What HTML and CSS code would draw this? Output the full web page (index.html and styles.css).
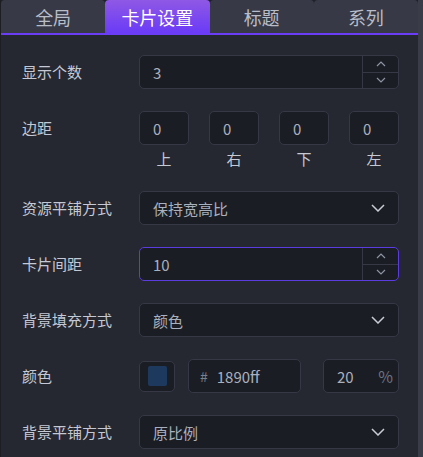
FILE: index.html
```html
<!DOCTYPE html>
<html lang="zh">
<head>
<meta charset="utf-8">
<title>卡片设置</title>
<link rel="stylesheet" href="styles.css">
</head>
<body>
<div class="panel">
  <div class="main">
    <div class="tabs">
      <div class="tab">全局</div>
      <div class="tab active">卡片设置</div>
      <div class="tab">标题</div>
      <div class="tab">系列</div>
    </div>
    <div class="form">
      <div class="row">
        <div class="label">显示个数</div>
        <div class="field">
          <span class="val">3</span>
          <div class="spin">
            <span class="spin-btn top"><svg width="10" height="6" viewBox="0 0 10 6"><polyline points="1,5 5,1 9,5" /></svg></span>
            <span class="spin-btn"><svg width="10" height="6" viewBox="0 0 10 6"><polyline points="1,1 5,5 9,1" /></svg></span>
          </div>
        </div>
      </div>

      <div class="row row-top">
        <div class="label">边距</div>
        <div class="margins">
          <div class="field box"><span class="val">0</span></div>
          <div class="field box"><span class="val">0</span></div>
          <div class="field box"><span class="val">0</span></div>
          <div class="field box"><span class="val">0</span></div>
          <div class="sub">上</div>
          <div class="sub">右</div>
          <div class="sub">下</div>
          <div class="sub">左</div>
        </div>
      </div>

      <div class="row">
        <div class="label">资源平铺方式</div>
        <div class="field select">
          <span class="val">保持宽高比</span>
          <svg class="chev" width="14" height="8" viewBox="0 0 14 8"><polyline points="1,1 7,7 13,1" /></svg>
        </div>
      </div>

      <div class="row">
        <div class="label">卡片间距</div>
        <div class="field focus">
          <span class="val">10</span>
          <div class="spin">
            <span class="spin-btn top"><svg width="10" height="6" viewBox="0 0 10 6"><polyline points="1,5 5,1 9,5" /></svg></span>
            <span class="spin-btn"><svg width="10" height="6" viewBox="0 0 10 6"><polyline points="1,1 5,5 9,1" /></svg></span>
          </div>
        </div>
      </div>

      <div class="row">
        <div class="label">背景填充方式</div>
        <div class="field select">
          <span class="val">颜色</span>
          <svg class="chev" width="14" height="8" viewBox="0 0 14 8"><polyline points="1,1 7,7 13,1" /></svg>
        </div>
      </div>

      <div class="row">
        <div class="label">颜色</div>
        <div class="color-line">
          <div class="swatch"><span class="swatch-fill"></span></div>
          <div class="field hex"><span class="hash">#</span><span class="val">1890ff</span></div>
          <div class="field pct"><span class="val">20</span><span class="unit">%</span></div>
        </div>
      </div>

      <div class="row">
        <div class="label">背景平铺方式</div>
        <div class="field select">
          <span class="val">原比例</span>
          <svg class="chev" width="14" height="8" viewBox="0 0 14 8"><polyline points="1,1 7,7 13,1" /></svg>
        </div>
      </div>
    </div>
  </div>
  <div class="scrollbar"></div>
</div>
</body>
</html>
```

FILE: styles.css
```css
* { box-sizing: border-box; }

html, body {
  margin: 0;
  padding: 0;
  background: #252731;
}

body {
  font-family: "Noto Sans CJK SC", "Noto Sans", sans-serif;
  font-size: 15px;
  color: #c5c9d3;
}

.panel {
  width: 423px;
  height: 457px;
  display: flex;
  overflow: hidden;
  background: #252731;
  border-left: 1px solid #1c1e24;
}

.main {
  flex: 1;
  min-width: 0;
  display: flex;
  flex-direction: column;
}

.scrollbar {
  width: 5px;
  background: #3a3d48;
}

.tabs {
  display: flex;
  height: 35px;
  background: #1f2128;
  border-bottom: 2px solid #6b3ef5;
}

.tab {
  flex: 1;
  display: flex;
  align-items: center;
  justify-content: center;
  background: #373a46;
  border-radius: 4px 4px 0 0;
  color: #b9bdc7;
  font-size: 18px;
  line-height: 1;
}

.tab.active {
  background: linear-gradient(180deg, #8f58e5 0%, #6a3bf7 100%);
  color: #ffffff;
}

.form {
  padding: 20px 19px 0 21px;
  display: flex;
  flex-direction: column;
  gap: 22px;
}

.row {
  display: grid;
  grid-template-columns: 117px 1fr;
  align-items: center;
}

.row-top {
  align-items: start;
}

.label {
  line-height: 34px;
  white-space: nowrap;
}

.field {
  height: 34px;
  display: flex;
  align-items: center;
  padding-left: 13px;
  background: #1b1d25;
  border: 1px solid #363945;
  border-radius: 5px;
  color: #a9b0bd;
  overflow: hidden;
}

.field.focus {
  border-color: #5b3ce0;
}

.val {
  line-height: 1;
}

.spin {
  margin-left: auto;
  width: 36px;
  height: 100%;
  display: flex;
  flex-direction: column;
  border-left: 1px solid #363945;
}

.spin-btn {
  flex: 1;
  display: flex;
  align-items: center;
  justify-content: center;
}

.spin-btn.top {
  border-bottom: 1px solid #363945;
}

.spin svg polyline {
  fill: none;
  stroke: #8d93a1;
  stroke-width: 1.2;
}

.select .chev {
  margin-left: auto;
  margin-right: 13px;
}

.chev polyline {
  fill: none;
  stroke: #c8ccd4;
  stroke-width: 1.5;
}

.margins {
  display: grid;
  grid-template-columns: repeat(4, 50px);
  justify-content: space-between;
  row-gap: 4px;
}

.sub {
  text-align: center;
  line-height: 20px;
  color: #c5c9d3;
}

.color-line {
  display: flex;
  align-items: center;
}

.swatch {
  width: 36px;
  height: 31px;
  display: flex;
  align-items: center;
  justify-content: center;
  background: #1b1d25;
  border: 1px solid #363945;
  border-radius: 5px;
}

.swatch-fill {
  width: 19px;
  height: 20px;
  border-radius: 2px;
  background: #1d3a5e;
}

.hex {
  width: 113px;
  margin-left: 13px;
  padding-left: 11px;
}

.hash {
  color: #7b808d;
  font-size: 14px;
  margin-right: 9px;
}

.pct {
  width: 76px;
  margin-left: auto;
  padding-right: 5px;
}

.unit {
  margin-left: auto;
  color: #6c7280;
  font-size: 16px;
}
```
